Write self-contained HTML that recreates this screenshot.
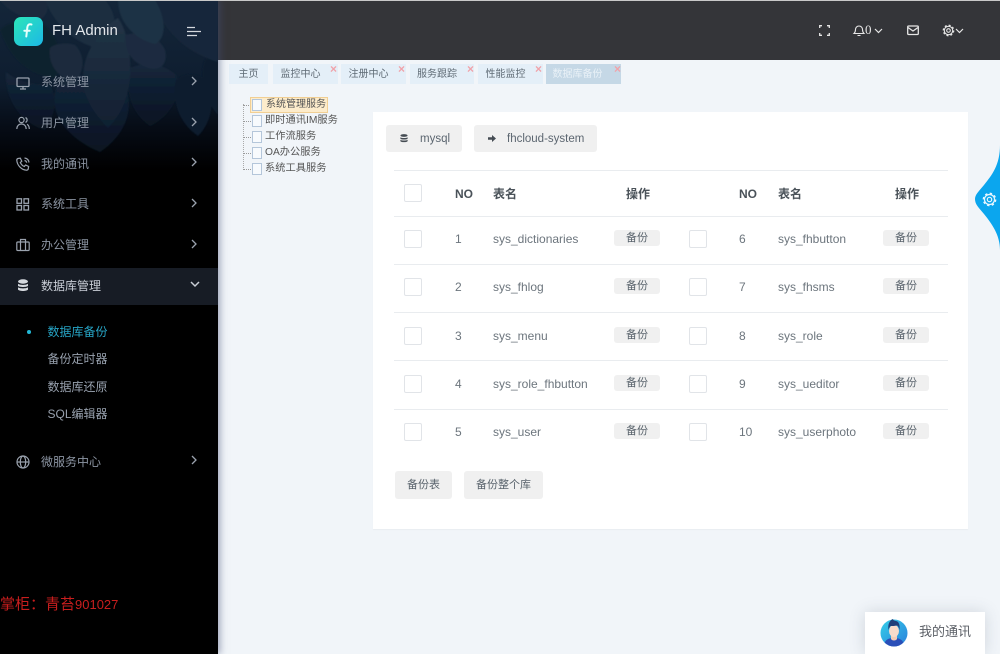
<!DOCTYPE html>
<html lang="zh">
<head>
<meta charset="utf-8">
<title>FH Admin</title>
<style>
html,body{margin:0;padding:0;width:1000px;height:654px;overflow:hidden;background:#f1f5f9;}
body{position:relative;font-family:"Liberation Sans","Noto Sans CJK SC",sans-serif;color:#6c757d;}
#wrap{position:absolute;left:0;top:0;width:1000px;height:654px;overflow:hidden;background:#f1f5f9;filter:blur(.35px);}
.a{position:absolute;white-space:nowrap;}
#top{position:absolute;left:218px;top:1px;width:782px;height:59px;background:#343539;}
#topline{position:absolute;left:0;top:0;width:1000px;height:1px;background:#c9c9c9;z-index:5;}
#side{position:absolute;left:0;top:0;width:218px;height:654px;background:#000;overflow:hidden;box-shadow:2px 0 7px rgba(70,80,120,.5);z-index:3;}
.m{position:absolute;left:41px;font-size:12px;line-height:16px;color:#8c95a3;white-space:nowrap;}
.s{position:absolute;left:47.5px;font-size:12px;line-height:16px;color:#98a1ae;white-space:nowrap;}
.tab{position:absolute;top:64px;height:20px;background:#e4eff8;font-size:10px;line-height:22px;text-align:center;color:#5f6b75;}
.x{position:absolute;top:64px;font-size:12px;line-height:10px;color:#f0a3aa;font-weight:bold;}
.tree{position:absolute;left:266px;font-size:10px;line-height:14px;color:#555;white-space:nowrap;}
.doc{position:absolute;left:252px;width:8px;height:10px;background:#f7fafd;border:1px solid #b4c6da;}
.dash{position:absolute;border-top:1px dotted #999;height:0;width:8px;left:243px;}
#card{position:absolute;left:373px;top:112px;width:595px;height:417px;background:#fff;box-shadow:0 1px 1px rgba(0,0,0,.04);}
.chip{position:absolute;top:125px;height:27px;background:#f0f0f0;border-radius:3px;font-size:11.5px;line-height:28px;color:#5c6670;}
.ln{position:absolute;height:1px;background:#e9ecef;left:394px;width:554px;}
.cb{position:absolute;width:16px;height:16px;border:1px solid #e1e4e8;border-radius:2px;background:#fff;}
.h{position:absolute;font-size:12px;line-height:16px;color:#4a5259;font-weight:bold;white-space:nowrap;}
.c{position:absolute;font-size:12px;line-height:16px;color:#6c757d;white-space:nowrap;}
.b{position:absolute;width:46px;height:16px;background:#f0f0f0;border-radius:3px;font-size:11px;line-height:17px;text-align:center;color:#59636c;}
.btn{position:absolute;top:471px;height:28px;background:#f0f0f0;border-radius:3px;font-size:11px;line-height:28px;text-align:center;color:#59636c;}
svg{position:absolute;overflow:visible;}
</style>
</head>
<body>
<div id="wrap">
<div id="topline"></div>
<div id="top"></div>

<div id="side">
<svg style="left:0;top:0" width="218" height="170" viewBox="0 0 218 170">
<defs>
<linearGradient id="g" x1="0" y1="0" x2="0" y2="1">
<stop offset="0" stop-color="#14263a"/><stop offset=".5" stop-color="#0e1d2f"/><stop offset=".75" stop-color="#060c16"/><stop offset="1" stop-color="#000"/>
</linearGradient>
<linearGradient id="p" x1="0" y1="0" x2="0" y2="1">
<stop offset="0" stop-color="#223446"/><stop offset="1" stop-color="#101f31"/>
</linearGradient>
<linearGradient id="q" x1="0" y1="0" x2="0" y2="1">
<stop offset="0" stop-color="#14273b"/><stop offset="1" stop-color="#081222"/>
</linearGradient>
<filter id="bl"><feGaussianBlur stdDeviation=".8"/></filter>
</defs>
<rect width="218" height="170" fill="url(#g)"/>
<g filter="url(#bl)">
<path d="M50 85C30 85 15 80 6 72 5 100 20 122 45 130 55 115 58 100 50 85Z" fill="url(#q)"/>
<path d="M60 80C45 105 60 135 100 152 125 135 135 110 125 85 105 75 80 72 60 80Z" fill="url(#q)"/>
<path d="M130 68C125 90 130 112 150 126 172 115 182 95 176 75 160 62 145 62 130 68Z" fill="url(#q)"/>
<path d="M176 80C172 100 178 122 198 136 212 122 215 100 208 82 198 72 186 72 176 80Z" fill="#0c1b2d"/>
<path d="M205 60C198 75 205 100 218 115V50Z" fill="#0c1b2d"/>
<path d="M0 30C10 60 30 75 55 78 65 60 60 40 45 25 30 18 10 20 0 30Z" fill="#10202f"/>
<path d="M155 0C160 25 180 50 218 62V0Z" fill="#16283b"/>
<path d="M45 0C55 25 75 45 105 50 118 35 118 15 105 0Z" fill="#1b2d40"/>
<path d="M0 0C8 10 20 18 40 20 50 12 48 5 45 0Z" fill="#1a2b3d"/>
<path d="M118 18C92 35 78 65 85 92 90 108 100 120 108 128 125 112 132 85 130 60 129 42 125 28 118 18Z" fill="url(#p)"/>
<path d="M125 35C125 50 130 62 148 68 162 72 168 62 165 50 160 38 142 30 125 35Z" fill="#1a2c3f"/>
<path d="M118 0C118 18 130 38 155 44 168 38 165 15 155 0Z" fill="#1d3044"/>
<path d="M50 48C48 65 58 78 75 82 85 70 85 55 75 45 65 42 55 44 50 48Z" fill="#1a2c3e"/>
</g>
</svg>
<svg style="left:14px;top:17px" width="29" height="29" viewBox="0 0 29 29">
<defs><linearGradient id="lg" x1="0" y1="0" x2="1" y2="1"><stop offset="0" stop-color="#2ce6b8"/><stop offset="1" stop-color="#1cb8e6"/></linearGradient></defs>
<rect width="29" height="29" rx="7" fill="url(#lg)"/>
<path d="M17.500 7.500c-2.500-.7-3.900.5-4.100 2.500l-1.100 9.500M10.300 13.800h5.400" fill="none" stroke="#e8fffb" stroke-width="2" stroke-linecap="round"/>
</svg>
<div class="a" style="left:52px;top:22px;font-size:15px;line-height:18px;color:#e2e6ea;">FH Admin</div>
<svg style="left:187px;top:26px" width="15" height="11" fill="none" stroke="#d5d9de" stroke-width="1.200"><path d="M0 1.500h8M0 5.500h14M0 9.500h10"/></svg>

<div class="m" style="top:74px">系统管理</div>
<div class="m" style="top:115px">用户管理</div>
<div class="m" style="top:156px">我的通讯</div>
<div class="m" style="top:196px">系统工具</div>
<div class="m" style="top:237px">办公管理</div>
<div class="a" style="left:0;top:268px;width:218px;height:37px;background:#171c25;"></div>
<div class="m" style="top:278px;color:#c9ced6;">数据库管理</div>
<div class="a" style="left:27px;top:330px;width:4px;height:4px;border-radius:50%;background:#22b8d6;"></div>
<div class="s" style="top:324px;color:#27a5c6;">数据库备份</div>
<div class="s" style="top:351px">备份定时器</div>
<div class="s" style="top:379px">数据库还原</div>
<div class="s" style="top:406px">SQL编辑器</div>
<div class="m" style="top:454px">微服务中心</div>

<svg style="left:16px;top:76px" width="14" height="14" fill="none" stroke="#9aa2ae" stroke-width="1.300"><rect x="1" y="2" width="12" height="8.500" rx="1"/><path d="M7 10.500v2.500M4 13h6"/></svg>
<svg style="left:16px;top:116px" width="14" height="14" fill="none" stroke="#9aa2ae" stroke-width="1.200"><circle cx="5.500" cy="4" r="2.600"/><path d="M.8 13c0-3 2-5 4.700-5s4.700 2 4.700 5M9.500 1.600a2.600 2.600 0 0 1 0 4.800M11 8.300c1.400.7 2.300 2.400 2.300 4.700"/></svg>
<svg style="left:16px;top:157px" width="14" height="14" fill="none" stroke="#9aa2ae" stroke-width="1.200"><path d="M2 1.500l2.300-.3 1.500 3-1.500 1.300c.8 1.800 2.300 3.300 4 4l1.300-1.500 3 1.500-.3 2.300c-.2 1-1 1.500-2 1.400C5.500 12.800 1.300 8.500.8 3.500.7 2.600 1.200 1.700 2 1.500zM8.500 1c2.500.3 4.200 2 4.500 4.500M8.500 3.500c1.200.2 2 1 2.200 2.200"/></svg>
<svg style="left:16px;top:198px" width="14" height="13" fill="none" stroke="#9aa2ae" stroke-width="1.300"><rect x="1" y=".8" width="4.500" height="4.500"/><rect x="8" y=".8" width="4.500" height="4.500"/><rect x="1" y="7.500" width="4.500" height="4.500"/><rect x="8" y="7.500" width="4.500" height="4.500"/></svg>
<svg style="left:16px;top:238px" width="14" height="14" fill="none" stroke="#9aa2ae" stroke-width="1.200"><rect x=".8" y="4" width="12.400" height="8.500" rx="1"/><path d="M4.500 12.500V1.500h5v11"/></svg>
<svg style="left:17px;top:279px" width="12" height="13" fill="#d5d9de"><ellipse cx="6" cy="2.500" rx="5" ry="2.200"/><path d="M1 4.800c1.500 1.500 8.500 1.500 10 0v2.100c-1.500 1.500-8.500 1.500-10 0zM1 8.200c1.500 1.500 8.500 1.500 10 0v2.300c-1 2-9 2-10 0z"/></svg>
<svg style="left:16px;top:455px" width="14" height="14" fill="none" stroke="#9aa2ae" stroke-width="1.200"><circle cx="7" cy="7" r="6"/><ellipse cx="7" cy="7" rx="2.700" ry="6"/><path d="M1 7h12"/></svg>

<svg style="left:191px;top:76px" width="6" height="10" fill="none" stroke="#9aa2ae" stroke-width="1.300"><path d="M1 1l4 4-4 4"/></svg>
<svg style="left:191px;top:117px" width="6" height="10" fill="none" stroke="#9aa2ae" stroke-width="1.300"><path d="M1 1l4 4-4 4"/></svg>
<svg style="left:191px;top:157px" width="6" height="10" fill="none" stroke="#9aa2ae" stroke-width="1.300"><path d="M1 1l4 4-4 4"/></svg>
<svg style="left:191px;top:198px" width="6" height="10" fill="none" stroke="#9aa2ae" stroke-width="1.300"><path d="M1 1l4 4-4 4"/></svg>
<svg style="left:191px;top:239px" width="6" height="10" fill="none" stroke="#9aa2ae" stroke-width="1.300"><path d="M1 1l4 4-4 4"/></svg>
<svg style="left:190px;top:281px" width="10" height="6" fill="none" stroke="#c9ced6" stroke-width="1.500"><path d="M1 1l4 4 4-4"/></svg>
<svg style="left:191px;top:455px" width="6" height="10" fill="none" stroke="#9aa2ae" stroke-width="1.300"><path d="M1 1l4 4-4 4"/></svg>

<div class="a" style="left:0;top:596px;font-family:'Liberation Sans','WenQuanYi Zen Hei','Noto Sans CJK SC',sans-serif;font-size:15px;line-height:18px;color:#c81e1e;">掌柜：青苔<span style="font-size:13px">901027</span></div>
</div>

<!-- top icons -->
<svg style="left:819px;top:25px" width="11" height="11" fill="none" stroke="#e6e6e6" stroke-width="1.300"><path d="M.7 3V.7H3M8 .7h2.300V3M.7 8v2.300H3M8 10.300h2.300V8"/></svg>
<svg style="left:853px;top:24px" width="12" height="13" fill="none" stroke="#e6e6e6" stroke-width="1.100"><path d="M1 9.500c1-1 1.500-2 1.500-4a3.500 3.500 0 0 1 7 0c0 2 .5 3 1.500 4zM4.500 11.500h3"/></svg>
<div class="a" style="left:865px;top:22px;font-size:13px;line-height:16px;color:#e6e6e6;font-family:'Liberation Serif',serif;">0</div>
<svg style="left:874px;top:28px" width="9" height="6" fill="none" stroke="#e6e6e6" stroke-width="1.200"><path d="M1 1l3.500 3.500L8 1"/></svg>
<svg style="left:907px;top:25px" width="12" height="11" fill="none" stroke="#e6e6e6" stroke-width="1.300"><rect x=".7" y="1" width="10.600" height="8.500" rx="1"/><path d="M1 2.500l5 3.500 5-3.500"/></svg>
<svg style="left:942px;top:24px" width="13" height="13" fill="none" stroke="#e6e6e6"><circle cx="6.500" cy="6.500" r="1.800" stroke-width="1.100"/><circle cx="6.500" cy="6.500" r="4.200" stroke-width="1.100"/><circle cx="6.500" cy="6.500" r="5.200" stroke-width="1.300" stroke-dasharray="2 2.085"/></svg>
<svg style="left:955px;top:28px" width="9" height="6" fill="none" stroke="#e6e6e6" stroke-width="1.200"><path d="M1 1l3.500 3.500L8 1"/></svg>

<!-- tabs -->
<div class="tab" style="left:229px;width:39px;">主页</div>
<div class="tab" style="left:273px;width:65px;"><span style="margin-right:10px">监控中心</span></div><div class="x" style="left:330px">×</div>
<div class="tab" style="left:341px;width:65px;"><span style="margin-right:10px">注册中心</span></div><div class="x" style="left:398px">×</div>
<div class="tab" style="left:410px;width:64px;"><span style="margin-right:10px">服务跟踪</span></div><div class="x" style="left:467px">×</div>
<div class="tab" style="left:478px;width:65px;"><span style="margin-right:10px">性能监控</span></div><div class="x" style="left:535px">×</div>
<div class="tab" style="left:546px;width:75px;background:#c5d8e6;color:#e9f1f7;"><span style="margin-right:12px">数据库备份</span></div><div class="x" style="left:614px">×</div>

<!-- tree -->
<div class="a" style="left:243px;top:104px;height:66px;border-left:1px dotted #aaa;"></div>
<div class="dash" style="top:105px"></div><div class="dash" style="top:121px"></div><div class="dash" style="top:137px"></div><div class="dash" style="top:153px"></div><div class="dash" style="top:169px"></div>
<div class="a" style="left:250px;top:97px;width:76px;height:14px;background:#fdeccb;border:1px solid #f1cf94;"></div>
<div class="doc" style="top:99px"></div><div class="doc" style="top:115px"></div><div class="doc" style="top:131px"></div><div class="doc" style="top:147px"></div><div class="doc" style="top:163px"></div>
<div class="tree" style="top:97.500px">系统管理服务</div>
<div class="tree" style="top:113.500px;left:265px;font-size:10.250px;">即时通讯IM服务</div>
<div class="tree" style="top:129.500px;left:265px;font-size:10.250px;">工作流服务</div>
<div class="tree" style="top:145.500px;left:265px;font-size:10.250px;">OA办公服务</div>
<div class="tree" style="top:161.500px;left:265px;font-size:10.250px;">系统工具服务</div>

<!-- card -->
<div id="card"></div>
<div class="chip" style="left:386px;width:76px;"><span style="margin-left:34px">mysql</span></div>
<svg style="left:400px;top:134px" width="8" height="9" fill="#454c53"><ellipse cx="4" cy="1.500" rx="3.600" ry="1.400"/><path d="M.4 3.200c1 1 6.200 1 7.200 0v1.500c-1 1-6.200 1-7.200 0zM.4 5.800c1 1 6.200 1 7.200 0v1.400c-1 1.300-6.200 1.300-7.200 0z"/></svg>
<div class="chip" style="left:474px;width:123px;"><span style="margin-left:33px">fhcloud-system</span></div>
<svg style="left:488px;top:135px" width="8" height="7" fill="#454c53"><path d="M0 2.200h4V0l4 3.500L4 7V4.800H0z"/></svg>

<div class="ln" style="top:170px"></div>
<div class="ln" style="top:216px"></div>
<div class="ln" style="top:264px"></div>
<div class="ln" style="top:312px"></div>
<div class="ln" style="top:360px"></div>
<div class="ln" style="top:409px"></div>

<div class="cb" style="left:404px;top:184px"></div>
<div class="h" style="left:455px;top:186px">NO</div>
<div class="h" style="left:493px;top:186px">表名</div>
<div class="h" style="left:626px;top:186px">操作</div>
<div class="h" style="left:739px;top:186px">NO</div>
<div class="h" style="left:778px;top:186px">表名</div>
<div class="h" style="left:895px;top:186px">操作</div>

<div class="cb" style="left:404px;top:230px"></div><div class="c" style="left:455px;top:231px">1</div><div class="c" style="left:493px;top:231px">sys_dictionaries</div><div class="b" style="left:614px;top:230px">备份</div>
<div class="cb" style="left:689px;top:230px"></div><div class="c" style="left:739px;top:231px">6</div><div class="c" style="left:778px;top:231px">sys_fhbutton</div><div class="b" style="left:883px;top:230px">备份</div>

<div class="cb" style="left:404px;top:278px"></div><div class="c" style="left:455px;top:279px">2</div><div class="c" style="left:493px;top:279px">sys_fhlog</div><div class="b" style="left:614px;top:278px">备份</div>
<div class="cb" style="left:689px;top:278px"></div><div class="c" style="left:739px;top:279px">7</div><div class="c" style="left:778px;top:279px">sys_fhsms</div><div class="b" style="left:883px;top:278px">备份</div>

<div class="cb" style="left:404px;top:327px"></div><div class="c" style="left:455px;top:328px">3</div><div class="c" style="left:493px;top:328px">sys_menu</div><div class="b" style="left:614px;top:327px">备份</div>
<div class="cb" style="left:689px;top:327px"></div><div class="c" style="left:739px;top:328px">8</div><div class="c" style="left:778px;top:328px">sys_role</div><div class="b" style="left:883px;top:327px">备份</div>

<div class="cb" style="left:404px;top:375px"></div><div class="c" style="left:455px;top:376px">4</div><div class="c" style="left:493px;top:376px">sys_role_fhbutton</div><div class="b" style="left:614px;top:375px">备份</div>
<div class="cb" style="left:689px;top:375px"></div><div class="c" style="left:739px;top:376px">9</div><div class="c" style="left:778px;top:376px">sys_ueditor</div><div class="b" style="left:883px;top:375px">备份</div>

<div class="cb" style="left:404px;top:423px"></div><div class="c" style="left:455px;top:424px">5</div><div class="c" style="left:493px;top:424px">sys_user</div><div class="b" style="left:614px;top:423px">备份</div>
<div class="cb" style="left:689px;top:423px"></div><div class="c" style="left:739px;top:424px">10</div><div class="c" style="left:778px;top:424px">sys_userphoto</div><div class="b" style="left:883px;top:423px">备份</div>

<div class="btn" style="left:395px;width:57px;">备份表</div>
<div class="btn" style="left:464px;width:79px;">备份整个库</div>

<!-- settings tab -->
<svg style="left:972px;top:140px" width="28" height="110" viewBox="0 0 28 110"><path d="M28 5C28 25 20 35 12 45 6 52 3 55 3 59 3 64 6 67 12 74 20 84 28 95 28 110Z" fill="#0ba6ee"/></svg>
<svg style="left:982px;top:192px" width="15" height="15" fill="none" stroke="#e8f6fe"><circle cx="7.500" cy="7.500" r="2.200" stroke-width="1.200"/><circle cx="7.500" cy="7.500" r="5" stroke-width="1.200"/><circle cx="7.500" cy="7.500" r="6.100" stroke-width="1.500" stroke-dasharray="2.400 2.390"/></svg>

<!-- chat widget -->
<div class="a" style="left:865px;top:612px;width:120px;height:42px;background:#fff;box-shadow:0 0 16px rgba(60,70,90,.18);"></div>
<svg style="left:880px;top:618px" width="28" height="29" viewBox="0 0 28 29">
<defs><linearGradient id="av" x1="0" y1="0" x2="1" y2="1"><stop offset="0" stop-color="#35cfe8"/><stop offset="1" stop-color="#2a7fdc"/></linearGradient><clipPath id="cc"><circle cx="14" cy="15" r="13.500"/></clipPath></defs>
<circle cx="14" cy="15" r="13.500" fill="url(#av)"/>
<g clip-path="url(#cc)"><path d="M4 29c0-7 4-9 10-9s10 2 10 9z" fill="#2a4fb8"/><path d="M11 17h6v4c-1 2-5 2-6 0z" fill="#f3cdb8"/><ellipse cx="14" cy="13" rx="5" ry="6" fill="#f8dccb"/></g>
<path d="M8.500 12C7.500 6 10 2 13 1c0 1 1 1.500 3 2 3 .5 4 4 3.500 9-.5-2-1-4-2.500-4.500-2 .5-5 .5-6.500.5-1 1-1.500 2.500-2 4z" fill="#1f3f7a"/>
</svg>
<div class="a" style="left:919px;top:624px;font-size:13px;line-height:16px;color:#5b5f66;">我的通讯</div>
</div>
</body>
</html>
